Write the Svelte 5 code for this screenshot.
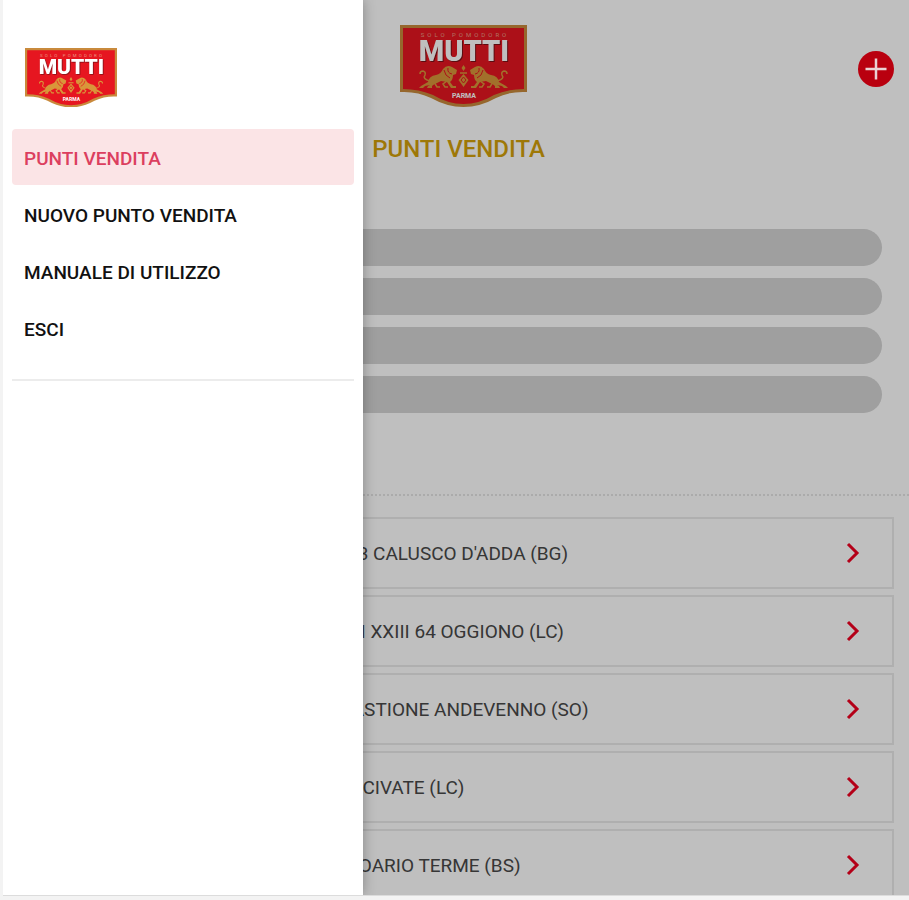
<script>
    let current = 'PUNTI VENDITA';

    const menu = [
        'PUNTI VENDITA',
        'NUOVO PUNTO VENDITA',
        'MANUALE DI UTILIZZO',
        'ESCI',
    ];

    const stores = [
        "33 CALUSCO D'ADDA (BG)",
        'NI XXIII 64 OGGIONO (LC)',
        '\u00a0ASTIONE ANDEVENNO (SO)',
        '3 CIVATE (LC)',
        'BOARIO TERME (BS)',
    ];

    const filters = [1, 2, 3, 4];
</script>

{#snippet lion()}
    <path class="line" d="M30 56 Q22 54 25 50 Q26 47 23 46 Q20 46 20 49" />
    <path d="M28 57 Q29 51 36 50 Q41 49 43 44 Q47 39 52 42 L57 45 L56 49 L53 50 Q53 55 50 57 L53 61 H56 V63 H51 L47 57 L41 56 L37 58 Q34 59 32 61 L32 63 H27 L28 61 L30 60 L25 61 L23 63 H19 L21 61 Z" />
    <path class="line" d="M47 56 L43 59 L45 62 H48 M34 57 L37 62 H40" />
    <path class="mane" d="M44 45 Q45 51 50 53 M48 43 Q47 48 52 49" />
{/snippet}

{#snippet logo()}
    <svg class="logo" viewBox="0 0 127 82" role="img" aria-label="Mutti Parma">
        <path class="edge" d="M0 0 H127 V67 Q110 66 96 73 Q80 82 63.500 82 Q47 82 31 73 Q17 66 0 67 Z" />
        <path class="field" d="M3 3 H124 V64 Q108 64 94 70 Q79 79 63.500 79 Q48 79 33 70 Q19 64 3 64 Z" />
        <text class="motto" x="65" y="12">SOLO POMODORO</text>
        <text class="brand" x="64" y="36">MUTTI</text>
        <g class="gold">
            <g>{@render lion()}</g>
            <g transform="translate(127 0) scale(-1 1)">{@render lion()}</g>
            <path d="M63.500 40 l2 3 -2 3 -2 -3 z M63.500 49 l5 6 -5 7 -5 -7 z" />
            <path class="mane" d="M61 55 l2.500 -3 2.500 3 -2.500 3 z" />
            <path class="line" d="M60 48 h7" />
        </g>
        <text class="city" x="64" y="73">PARMA</text>
    </svg>
{/snippet}

<div class="app">
    <main>
        <header>
            <a class="home" href="#home">{@render logo()}</a>
            <button class="add" aria-label="Nuovo punto vendita">
                <svg viewBox="0 0 36 36"><path d="M18 7.500 V28.500 M7.500 18 H28.500" /></svg>
            </button>
        </header>

        <h1>PUNTI VENDITA</h1>

        <div class="filters">
            {#each filters as filter (filter)}
                <div class="filter"></div>
            {/each}
        </div>

        <ul class="stores">
            {#each stores as store}
                <li>
                    <a class="store" href="#store">
                        <span>{store}</span>
                        <svg viewBox="0 0 14 22"><path d="M2 2 L11 11 L2 20" /></svg>
                    </a>
                </li>
            {/each}
        </ul>
    </main>

    <div class="backdrop"></div>

    <nav class="drawer">
        <a class="drawer-home" href="#home">{@render logo()}</a>
        <ul>
            {#each menu as item}
                <li>
                    <a class="item" class:active={item === current} href="#menu" on:click={() => (current = item)}>{item}</a>
                </li>
            {/each}
        </ul>
        <hr />
    </nav>
</div>

<style>
    :global(body) {
        margin: 0;
        background: #f3f3f3;
        font-family: Roboto, sans-serif;
    }

    .app {
        position: relative;
        box-sizing: border-box;
        height: calc(100vh - 4px);
        margin-left: 3px;
        border-bottom: 1px solid #dcdcdc;
        overflow: hidden;
        background: white;
    }

    ul {
        list-style: none;
        margin: 0;
        padding: 0;
    }

    a {
        color: inherit;
        text-decoration: none;
    }

    svg {
        display: block;
    }

    header {
        display: grid;
        grid-template-columns: 1fr auto 1fr;
        align-items: center;
        padding: 25px 15px 0 30px;
    }

    .home {
        grid-column: 2;
        width: 127px;
    }

    .add {
        position: relative;
        z-index: 2;
        justify-self: end;
        width: 36px;
        height: 36px;
        margin-top: 5px;
        padding: 0;
        border: none;
        border-radius: 50%;
        background: #b9000f;
        cursor: pointer;
    }

    .add path {
        fill: none;
        stroke: #ead2d4;
        stroke-width: 2.5;
    }

    h1 {
        margin: 25px 15px 63px 20px;
        font-size: 24px;
        font-weight: 500;
        line-height: 34px;
        text-align: center;
        color: #d3a00a;
    }

    .filters {
        display: flex;
        flex-direction: column;
        gap: 12px;
        padding: 0 27px 81px;
        border-bottom: 2px dotted #e4e4e4;
    }

    .filter {
        height: 37px;
        border-radius: 19px;
        background: #d4d4d4;
    }

    .stores {
        display: flex;
        flex-direction: column;
        gap: 6px;
        padding: 21px 15px;
    }

    .store {
        display: flex;
        align-items: center;
        justify-content: space-between;
        box-sizing: border-box;
        height: 72px;
        padding: 0 32px 0 327px;
        border: 2px solid #eaeaea;
        font-size: 19px;
        color: #484848;
    }

    .store svg {
        width: 14px;
        height: 22px;
    }

    .store path {
        fill: none;
        stroke: #f00020;
        stroke-width: 3;
    }

    .backdrop {
        position: absolute;
        inset: 0;
        z-index: 1;
        background: rgba(0, 0, 0, 0.25);
    }

    .drawer {
        position: absolute;
        top: 0;
        bottom: 0;
        left: 0;
        z-index: 3;
        box-sizing: border-box;
        width: 360px;
        padding: 48px 9px 0;
        background: white;
        box-shadow: 0 0 12px rgba(0, 0, 0, 0.3);
    }

    .drawer-home {
        display: block;
        width: 92px;
        margin: 0 13px 22px;
    }

    .item {
        display: block;
        margin-bottom: 1px;
        padding: 4px 12px 0;
        border-radius: 4px;
        font-size: 19px;
        font-weight: 500;
        line-height: 52px;
        color: #111;
    }

    .item.active {
        background: #fbe4e6;
        color: #dc3f5f;
    }

    hr {
        margin: 23px 0 0;
        border: none;
        border-top: 2px solid #ececec;
    }

    .logo {
        width: 100%;
    }

    .edge {
        fill: #c98a3c;
    }

    .field {
        fill: #e61620;
    }

    .logo text {
        text-anchor: middle;
        fill: white;
    }

    .logo .brand {
        font-size: 29px;
        font-weight: 900;
        filter: drop-shadow(1px 1px 0 #7d1016);
    }

    .logo .motto {
        font-size: 6px;
        letter-spacing: 3px;
        fill: #eb9a86;
    }

    .logo .city {
        font-size: 7px;
        font-weight: 700;
    }

    .gold {
        fill: #d9963a;
    }

    .line {
        fill: none;
        stroke: #d9963a;
        stroke-width: 1.5;
    }

    .mane {
        fill: none;
        stroke: #e61620;
        stroke-width: 1;
    }
</style>
